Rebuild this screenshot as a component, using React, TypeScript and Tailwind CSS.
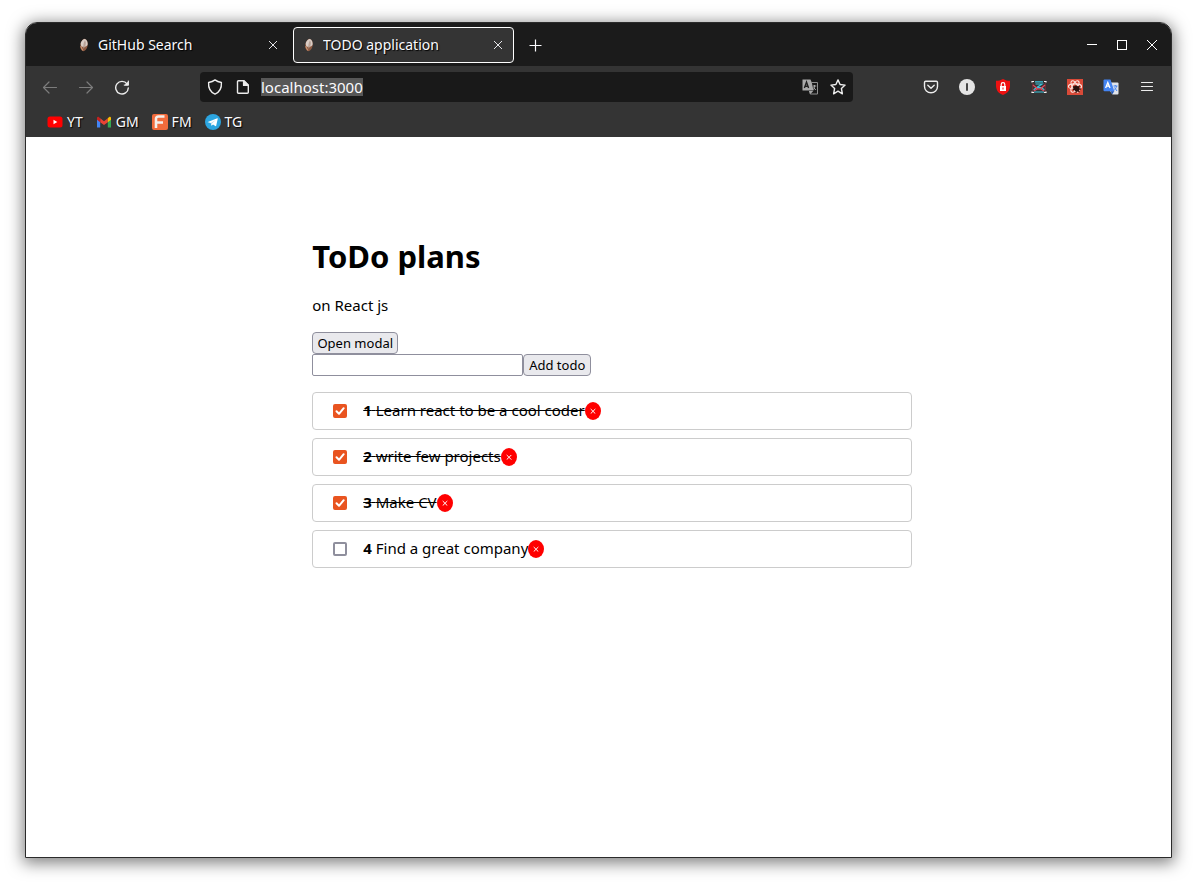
import { useState } from "react";
import type { ReactNode } from "react";

type Todo = { id: number; title: string; completed: boolean };

const initialTodos: Todo[] = [
  { id: 1, title: "Learn react to be a cool coder", completed: true },
  { id: 2, title: "write few projects", completed: true },
  { id: 3, title: "Make CV", completed: true },
  { id: 4, title: "Find a great company", completed: false },
];

function EggIcon() {
  return (
    <svg viewBox="0 0 16 16" className="size-4 shrink-0" aria-hidden="true">
      <g transform="rotate(10 7 8)">
        <ellipse cx="7" cy="8" rx="3.700" ry="6.200" fill="#8c5a42" />
        <path d="M3.400 6.500C4 3.500 5.500 2 7 1.900C9.200 2.200 10.500 5 10.500 7.500C9.500 9 8.500 9.800 7 9.500C5.500 10.800 4 10 3.400 6.500Z" fill="#d9cdc6" />
        <path d="M7 3.500C8.300 4 8.800 6 8.500 8.500L7.300 11.800C6.300 10 6 6 7 3.500Z" fill="#b9a297" />
        <path d="M4 9.800C5 11.200 5.500 12.500 7 13.600" stroke="#d09a78" strokeWidth="1" fill="none" />
      </g>
    </svg>
  );
}

function CloseIcon() {
  return (
    <svg viewBox="0 0 16 16" className="size-4" fill="none" stroke="currentColor" strokeWidth="0.9" aria-hidden="true">
      <path d="M4 4L12 12M12 4L4 12" />
    </svg>
  );
}

function Tab({ title, active = false }: { title: string; active?: boolean }) {
  return (
    <div
      className={
        active
          ? "flex h-9 w-[221px] items-center rounded-[4px] border border-white bg-[#343434] pr-[7px] pl-2"
          : "flex h-9 w-[221px] items-center rounded-[4px] border border-transparent pr-[7px] pl-2"
      }
    >
      <EggIcon />
      <span className="ml-[5px] flex-1 truncate leading-[22px] text-shadow-[1px_1px_1px_#000000]">{title}</span>
      <button type="button" aria-label={`Close ${title}`} className="shrink-0">
        <CloseIcon />
      </button>
    </div>
  );
}

function IconButton({ label, dim = false, children }: { label: string; dim?: boolean; children: ReactNode }) {
  return (
    <button
      type="button"
      aria-label={label}
      className={
        dim
          ? "flex size-9 shrink-0 items-center justify-center text-[#7c7c7c]"
          : "flex size-9 shrink-0 items-center justify-center text-[#ececec]"
      }
    >
      {children}
    </button>
  );
}

function TitleBar() {
  return (
    <div className="flex h-[43px] items-center bg-[#1b1b1b] pl-[42px] text-[14px] text-[#fbfbfe]">
      <div className="flex gap-1">
        <Tab title="GitHub Search" />
        <Tab title="TODO application" active />
      </div>
      <button type="button" aria-label="New tab" className="ml-[14px]">
        <svg viewBox="0 0 16 16" className="size-4" fill="none" stroke="currentColor" strokeWidth="1.2" aria-hidden="true">
          <path d="M7.500 2.500V14.500M1.500 8.500H13.500" />
        </svg>
      </button>
      <div className="mr-[11px] ml-auto flex gap-[14px]">
        <button type="button" aria-label="Minimize">
          <svg viewBox="0 0 16 16" className="size-4" shapeRendering="crispEdges" aria-hidden="true">
            <path d="M3 7.500H13" stroke="white" />
          </svg>
        </button>
        <button type="button" aria-label="Maximize">
          <svg viewBox="0 0 16 16" className="size-4" shapeRendering="crispEdges" aria-hidden="true">
            <path d="M3.500 3.500H12.500V12.500H3.500Z" fill="none" stroke="white" />
          </svg>
        </button>
        <button type="button" aria-label="Close window">
          <svg viewBox="0 0 16 16" className="size-4" aria-hidden="true">
            <path d="M3 3L13 13M13 3L3 13" fill="none" stroke="white" />
          </svg>
        </button>
      </div>
    </div>
  );
}

function AddressBar() {
  return (
    <div className="mx-[60px] flex h-[30px] min-w-0 flex-1 items-center rounded-[4px] bg-[#191919] px-[7px] text-[#ececec]">
      <svg viewBox="0 0 16 16" className="size-4 shrink-0" fill="none" stroke="currentColor" strokeWidth="1.4" strokeLinejoin="round" aria-hidden="true">
        <path d="M8 0.900C10 2.500 12 3.100 14.400 3.500C14.800 9 12.800 13 8 15.100C3.200 13 1.200 9 1.600 3.500C4 3.100 6 2.500 8 0.900Z" />
      </svg>
      <svg viewBox="0 0 16 16" className="ml-3 size-4 shrink-0" fill="none" stroke="currentColor" strokeWidth="1.4" strokeLinejoin="round" aria-hidden="true">
        <path d="M3.500 1.700H9L13.300 6V13.300Q13.300 14.300 12.300 14.300H3.500Q2.500 14.300 2.500 13.300V2.700Q2.500 1.700 3.500 1.700Z" />
        <path d="M8.600 1.700V6.400H13.300Z" fill="currentColor" />
      </svg>
      <input
        type="text"
        aria-label="Address"
        defaultValue="localhost:3000"
        className="ml-[10px] field-sizing-content h-[18px] bg-[#575757] text-[15px] leading-[18px] text-[#fbfbfe] outline-none"
      />
      <button type="button" aria-label="Translate page" className="ml-auto shrink-0">
        <svg viewBox="0 0 16 16" className="size-4" aria-hidden="true">
          <path d="M0.500 0.500H8.500L9.800 3.500L11.500 11.500H0.500Z" fill="#a9a9a9" />
          <path d="M9.500 3.500H15.500V15H8.200L7.500 12" fill="none" stroke="#8f8f8f" />
          <path d="M7 12H11.200L8.500 15Z" fill="#a9a9a9" />
          <path d="M2.400 9L4.500 3L6.600 9M3 7.200H6" fill="none" stroke="#202020" strokeWidth="1.400" />
          <path d="M11 7H14.300M12.500 6V7C12.600 9 12 10 11 10.800M11.500 8.500L13.800 11" fill="none" stroke="#a9a9a9" strokeWidth="1" />
        </svg>
      </button>
      <button type="button" aria-label="Bookmark this page" className="ml-3 shrink-0">
        <svg viewBox="0 0 16 16" className="size-4" fill="none" stroke="currentColor" strokeWidth="1.4" strokeLinejoin="round" aria-hidden="true">
          <path d="M8 0.900L10.100 5.500L15.100 6.100L11.400 9.500L12.400 14.800L8 12.200L3.600 14.800L4.600 9.500L0.900 6.100L5.900 5.500Z" />
        </svg>
      </button>
    </div>
  );
}

function NavBar() {
  return (
    <div className="flex h-[42px] items-center bg-[#343434] px-[6px]">
      <IconButton label="Back" dim>
        <svg viewBox="0 0 16 16" className="size-4" fill="none" stroke="currentColor" strokeWidth="1.2" strokeLinecap="round" strokeLinejoin="round" aria-hidden="true">
          <path d="M14.500 8.500H1.500M7 3L1.500 8.500L7 14" />
        </svg>
      </IconButton>
      <IconButton label="Forward" dim>
        <svg viewBox="0 0 16 16" className="size-4" fill="none" stroke="currentColor" strokeWidth="1.2" strokeLinecap="round" strokeLinejoin="round" aria-hidden="true">
          <path d="M1.500 8.500H14.500M9 3L14.500 8.500L9 14" />
        </svg>
      </IconButton>
      <IconButton label="Reload">
        <svg viewBox="0 0 16 16" className="size-4" fill="none" stroke="currentColor" strokeWidth="1.400" strokeLinecap="round" aria-hidden="true">
          <path d="M13.100 5A6.300 6.300 0 1 0 14.300 9" />
          <path d="M14.800 1.800V6.500H10.200Z" fill="currentColor" stroke="none" />
          <path d="M14.300 2V6.100H10.200" strokeWidth="1" />
        </svg>
      </IconButton>
      <AddressBar />
      <IconButton label="Save to Pocket">
        <svg viewBox="0 0 16 16" className="size-4" fill="none" stroke="currentColor" strokeWidth="1.400" strokeLinecap="round" strokeLinejoin="round" aria-hidden="true">
          <path d="M2.700 2.200H13.300Q14.500 2.200 14.500 3.400V7.500A6.500 6.300 0 0 1 1.500 7.500V3.400Q1.500 2.200 2.700 2.200Z" />
          <path d="M4.800 6.200L8 9.200L11.200 6.200" />
        </svg>
      </IconButton>
      <IconButton label="Account">
        <svg viewBox="0 0 16 16" className="size-4" aria-hidden="true">
          <circle cx="8" cy="8" r="8" fill="#e4e4e4" />
          <path d="M8 4.300V11.800" stroke="#333333" strokeWidth="1.800" />
        </svg>
      </IconButton>
      <IconButton label="Password manager">
        <svg viewBox="0 0 16 16" className="size-4" aria-hidden="true">
          <path d="M8 0C10.300 1.400 12.500 1.700 15 1.800V7C14.800 11.500 12.200 14.500 8 16C3.800 14.500 1.200 11.500 1 7V1.800C3.500 1.700 5.700 1.400 8 0Z" fill="#ee1111" />
          <rect x="5" y="7" width="6" height="5" fill="white" />
          <path d="M6.200 7V5.500A1.800 1.800 0 0 1 9.800 5.500V7" fill="none" stroke="white" strokeWidth="1.200" />
          <path d="M8 8.500V10.500" stroke="#ee1111" />
        </svg>
      </IconButton>
      <IconButton label="Video extension">
        <svg viewBox="0 0 16 16" className="size-4" fill="none" aria-hidden="true">
          <path d="M4 2.800H12M4.500 5H11L5.500 8.700H12M2.500 13H13.500M2.500 11L5 9M13.500 11L11 9" stroke="#3cc3dc" strokeWidth="1.200" />
          <path d="M1.800 4V13M14.200 4V13" stroke="#7c3038" strokeWidth="1" />
          <path d="M2 6L6.500 9.800H9.500L14 6M3 12L6.500 9.800M13 12L9.500 9.800" stroke="#e0495b" strokeWidth="1.200" />
          <path d="M1 3.500V2.500H3M15 3.500V2.500H13M1 12.500V13.500H3M15 12.500V13.500H13" stroke="#f2f2f2" strokeWidth="1.200" />
        </svg>
      </IconButton>
      <IconButton label="React Developer Tools">
        <svg viewBox="0 0 16 16" className="size-4" fill="none" aria-hidden="true">
          <rect width="16" height="16" fill="#d94a38" />
          <g stroke="#fbe4e0" strokeWidth="1.100">
            <ellipse cx="8" cy="7.500" rx="6.600" ry="2.600" />
            <ellipse cx="8" cy="7.500" rx="6.400" ry="2.600" transform="rotate(60 8 7.500)" />
            <ellipse cx="8" cy="7.500" rx="6.400" ry="2.600" transform="rotate(120 8 7.500)" />
          </g>
          <ellipse cx="9.500" cy="9.500" rx="3.200" ry="2.600" fill="#27110e" transform="rotate(35 9.500 9.500)" />
          <path d="M6 7.500L12.500 13M6 11L8 9M9 14L9.500 10M12.500 7L10 9.500M14 10L11 10" stroke="#27110e" strokeWidth="1.100" />
        </svg>
      </IconButton>
      <IconButton label="Google Translate">
        <svg viewBox="0 0 16 16" className="size-4" aria-hidden="true">
          <path d="M8 3.500H14.500Q15.500 3.500 15.500 4.500V14.500Q15.500 15.500 14.500 15.500H9.500L7 12Z" fill="#dfe3ea" />
          <path d="M1.500 0.500H7.500L11.300 12.300H1.500Q0.500 12.300 0.500 11.300V1.500Q0.500 0.500 1.500 0.500Z" fill="#4384f3" />
          <path d="M7.500 12.300H11.300L9.200 15.300Z" fill="#1b52b5" />
          <path d="M2.600 9L4.800 3.500L7 9M3.400 7.200H6.200" fill="none" stroke="white" strokeWidth="1.300" />
          <path d="M10.500 7H14.500M12.300 6V7M13.500 7C13.200 9 12.500 10 11.300 11M11.500 8.500L14 12" fill="none" stroke="#4384f3" strokeWidth="1" />
        </svg>
      </IconButton>
      <IconButton label="Application menu">
        <svg viewBox="0 0 16 16" className="size-4" fill="none" stroke="currentColor" strokeWidth="1.200" strokeLinecap="round" aria-hidden="true">
          <path d="M2.500 3.500H13.500M2.500 7.500H13.500M2.500 11.500H13.500" />
        </svg>
      </IconButton>
    </div>
  );
}

function Bookmark({ label, children }: { label: string; children: ReactNode }) {
  return (
    <a href="#" className="flex items-center gap-1">
      {children}
      <span className="text-shadow-[1px_1px_1px_#000000]">{label}</span>
    </a>
  );
}

function BookmarksBar() {
  return (
    <nav aria-label="Bookmarks" className="flex h-[29px] items-center gap-[13px] bg-[#343434] pb-px pl-[21px] text-[14px] leading-5 text-[#fbfbfe]">
      <Bookmark label="YT">
        <svg viewBox="0 0 16 16" className="size-4" aria-hidden="true">
          <rect x="0.500" y="2.500" width="15" height="11" rx="2.500" fill="#ff0000" />
          <path d="M6.500 5.800L10.300 8L6.500 10.200Z" fill="white" />
        </svg>
      </Bookmark>
      <Bookmark label="GM">
        <svg viewBox="0 0 16 16" className="size-4" aria-hidden="true">
          <path d="M1 4V13.500H4.200V6.500Z" fill="#4285f4" />
          <path d="M15 4V13.500H11.800V6.500Z" fill="#34a853" />
          <path d="M4.200 4.300L8 7.200L11.800 4.300V8.200L8 11L4.200 8.200Z" fill="#ea4335" />
          <path d="M1 4Q1 2.500 2.500 2.700L4.200 4.300V8.200L1 5.800Z" fill="#c5221f" />
          <path d="M15 4Q15 2.500 13.500 2.700L11.800 4.300V8.200L15 5.800Z" fill="#fbbc04" />
        </svg>
      </Bookmark>
      <Bookmark label="FM">
        <svg viewBox="0 0 16 16" className="size-4" aria-hidden="true">
          <rect width="16" height="16" rx="2" fill="#f26b3c" />
          <path d="M4 14V5Q4 2.500 6.500 2.500H12.500M4.500 8.500H11" fill="none" stroke="#f4eeea" strokeWidth="2.600" />
        </svg>
      </Bookmark>
      <Bookmark label="TG">
        <svg viewBox="0 0 16 16" className="size-4" aria-hidden="true">
          <circle cx="8" cy="8" r="8" fill="#2ca5e0" />
          <path d="M2.800 7.900L12.300 4.200Q12.900 4 12.700 4.900L11.200 11.800Q11 12.500 10.300 12.100L8 10.400L6.800 11.500Q6.400 11.900 6.300 11.200L5.700 9L3 8.300Q2.500 8.100 2.800 7.900Z" fill="white" />
          <path d="M5.900 9.100L10.700 6L7 9.600L6.700 11.300Z" fill="#b9d9ea" />
        </svg>
      </Bookmark>
    </nav>
  );
}

function TodoItem({ todo, onToggle, onRemove }: { todo: Todo; onToggle: () => void; onRemove: () => void }) {
  const inputId = `todo-${todo.id}`;
  return (
    <li className="flex h-[38px] items-center rounded-[4px] border border-[#cccccc] px-5">
      <span className="mr-4 grid size-[14px] shrink-0">
        <input
          id={inputId}
          type="checkbox"
          checked={todo.completed}
          onChange={onToggle}
          className="peer col-start-1 row-start-1 size-[14px] appearance-none rounded-[2px] border-2 border-[#8f8f9d] bg-white checked:border-[#e95420] checked:bg-[#e95420]"
        />
        <svg
          viewBox="0 0 14 14"
          className="pointer-events-none invisible col-start-1 row-start-1 size-[14px] peer-checked:visible"
          fill="none"
          stroke="white"
          strokeWidth="2"
          strokeLinecap="round"
          strokeLinejoin="round"
          aria-hidden="true"
        >
          <path d="M3.500 7.300L6 9.800L10.700 4.200" />
        </svg>
      </span>
      <label htmlFor={inputId} className={todo.completed ? "pb-0.5 line-through" : "pb-0.5"}>
        <strong>{todo.id}</strong> {todo.title}
      </label>
      <button
        type="button"
        onClick={onRemove}
        aria-label={`Remove ${todo.title}`}
        className="flex h-[18px] w-4 shrink-0 items-center justify-center rounded-[50%] bg-[#ff0000] text-white"
      >
        <svg viewBox="0 0 6 6" className="size-[6px]" fill="none" stroke="currentColor" strokeWidth="1" aria-hidden="true">
          <path d="M0.700 1L5.300 5.600M5.300 1L0.700 5.600" />
        </svg>
      </button>
    </li>
  );
}

function TodoPage() {
  const [todos, setTodos] = useState<Todo[]>(initialTodos);
  const [draft, setDraft] = useState("");

  const toggle = (id: number) =>
    setTodos(todos.map((t) => (t.id === id ? { ...t, completed: !t.completed } : t)));
  const remove = (id: number) => setTodos(todos.filter((t) => t.id !== id));
  const add = () => {
    if (!draft.trim()) return;
    setTodos([...todos, { id: todos.length + 1, title: draft, completed: false }]);
    setDraft("");
  };

  return (
    <main className="flex-1 bg-white pt-24 pb-10 pl-[25%] text-[15px] text-black">
      <div className="w-[600px] max-w-full">
        <h1 className="text-[31px] leading-[46px] font-bold">ToDo plans</h1>
        <p className="mt-[14px] mb-[14px] leading-[25px]">on React js</p>
        <button
          type="button"
          className="flex h-[22px] w-[86px] items-center justify-center rounded-[4px] border border-[#8f8f9d] bg-[#e9e9ed] pt-px text-[13px] whitespace-nowrap"
        >
          Open modal
        </button>
        <form
          className="flex"
          onSubmit={(e) => {
            e.preventDefault();
            add();
          }}
        >
          <input
            type="text"
            aria-label="New todo"
            value={draft}
            onChange={(e) => setDraft(e.target.value)}
            className="h-[22px] w-[211px] rounded-[2px] border border-[#8f8f9d] px-1 text-[13px]"
          />
          <button
            type="submit"
            className="flex h-[22px] w-[68px] items-center justify-center rounded-[4px] border border-[#8f8f9d] bg-[#e9e9ed] pt-px text-[13px] whitespace-nowrap"
          >
            Add todo
          </button>
        </form>
        <ul className="mt-4 flex flex-col gap-2">
          {todos.map((t) => (
            <TodoItem key={t.id} todo={t} onToggle={() => toggle(t.id)} onRemove={() => remove(t.id)} />
          ))}
        </ul>
      </div>
    </main>
  );
}

export default function App() {
  return (
    <div className="flex min-h-screen flex-col bg-white px-[25px] pt-[22px] pb-7 font-['Noto_Sans',sans-serif]">
      <div className="flex flex-1 flex-col overflow-hidden rounded-t-[12px] border border-[#2b2b2b] shadow-[0_3px_16px_2px_rgba(0,0,0,0.5)]">
        <TitleBar />
        <NavBar />
        <BookmarksBar />
        <TodoPage />
      </div>
    </div>
  );
}
